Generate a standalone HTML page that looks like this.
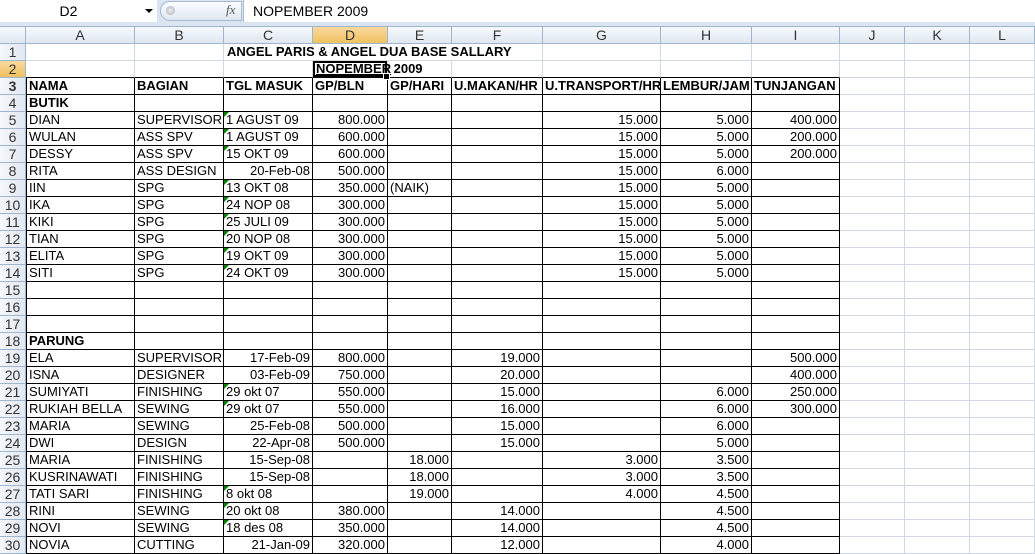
<!DOCTYPE html>
<html><head><meta charset="utf-8"><style>
*{box-sizing:border-box;margin:0;padding:0}
body{width:1035px;height:549px;overflow:hidden;background:#fff;font-family:"Liberation Sans",Arial,sans-serif;position:relative}
#fb{position:absolute;left:0;top:0;width:1035px;height:27px;background:#dbe5f1;border-bottom:1px solid #9eb6ce}
#nb{position:absolute;left:0;top:0;width:157px;height:22px;background:#fff;font-size:14px;line-height:22px;text-align:center;padding-right:20px;color:#000}
#arr{position:absolute;left:145px;top:9px;width:0;height:0;border-left:4px solid transparent;border-right:4px solid transparent;border-top:4px solid #000}
#pill{position:absolute;left:160px;top:1px;width:82px;height:20px;border-radius:10px 0 0 10px;background:linear-gradient(#fdfeff,#dde6f0);border:1px solid #a7bad0}
#dot{position:absolute;left:166px;top:6px;width:9px;height:9px;border-radius:50%;background:radial-gradient(#eee,#aab)}
#fx{position:absolute;left:226px;top:2px;font-family:"Liberation Serif",serif;font-style:italic;font-size:13px;color:#555}
#inp{position:absolute;left:243px;top:0;width:792px;height:22px;background:#fff;border-left:1px solid #a7bad0;font-size:14px;line-height:22px;padding-left:9px}
table{position:absolute;left:0;top:27px;border-spacing:0;table-layout:fixed;width:1035px}
td{height:17px;font-size:13px;line-height:16px;white-space:nowrap;overflow:hidden;padding:0 2px;border-right:1px solid #d0d7e5;border-bottom:1px solid #d0d7e5;position:relative;vertical-align:bottom}
tr.h td{height:16px;background:linear-gradient(#f7f9fc,#dfe7f1);border-right:1px solid #9eb6ce;border-bottom:1px solid #9eb6ce;text-align:center;color:#333;font-size:14px}
td:first-child{background:linear-gradient(90deg,#f4f7fb,#e1e8f1);border-right:1px solid #9eb6ce;border-bottom:1px solid #9eb6ce;text-align:center;color:#333;padding:0;font-size:14px}
tr.h td.sel,td.sel{background:linear-gradient(#f9d99f,#f1c15f)!important}
tr.k td:nth-child(n+2):nth-child(-n+10){border-right-color:#000;border-bottom-color:#000}
tr.k td:nth-child(2){border-left:1px solid #000}
tr.t td:nth-child(n+2):nth-child(-n+10){border-bottom-color:#000}
.r{text-align:right}.b{font-weight:bold}
.g::before{content:"";position:absolute;left:0;top:0;border-top:5px solid #008000;border-right:5px solid transparent}
#d2{box-shadow:inset 0 0 0 2px #000;overflow:visible}
#d2::after{content:"";position:absolute;right:-3px;bottom:-3px;width:5px;height:5px;background:#000;border:1px solid #fff;z-index:3}
.ttl{position:absolute;font-size:13px;font-weight:bold;line-height:16px;background:#fff;white-space:nowrap;z-index:2}
</style></head><body>
<div id="fb"></div><div id="nb">D2</div><div id="arr"></div><div id="pill"></div><div id="dot"></div><div id="fx">fx</div><div id="inp">NOPEMBER 2009</div>
<table>
<colgroup><col style="width:26px"><col style="width:109px"><col style="width:89px"><col style="width:89px"><col style="width:75px"><col style="width:64px"><col style="width:91px"><col style="width:118px"><col style="width:91px"><col style="width:88px"><col style="width:65px"><col style="width:65px"><col style="width:65px"></colgroup>
<tr class="h"><td></td><td>A</td><td>B</td><td>C</td><td class="sel">D</td><td>E</td><td>F</td><td>G</td><td>H</td><td>I</td><td>J</td><td>K</td><td>L</td></tr>
<tr><td>1</td><td></td><td></td><td></td><td></td><td></td><td></td><td></td><td></td><td></td><td></td><td></td><td></td></tr>
<tr class="t"><td class="sel">2</td><td></td><td></td><td></td><td id="d2"></td><td></td><td></td><td></td><td></td><td></td><td></td><td></td><td></td></tr>
<tr class="k b"><td>3</td><td>NAMA</td><td>BAGIAN</td><td>TGL MASUK</td><td>GP/BLN</td><td>GP/HARI</td><td>U.MAKAN/HR</td><td>U.TRANSPORT/HR</td><td>LEMBUR/JAM</td><td>TUNJANGAN</td><td></td><td></td><td></td></tr>
<tr class="k"><td>4</td><td class="b">BUTIK</td><td></td><td></td><td></td><td></td><td></td><td></td><td></td><td></td><td></td><td></td><td></td></tr>
<tr class="k"><td>5</td><td>DIAN</td><td>SUPERVISOR</td><td class="g">1 AGUST 09</td><td class="r">800.000</td><td></td><td></td><td class="r">15.000</td><td class="r">5.000</td><td class="r">400.000</td><td></td><td></td><td></td></tr>
<tr class="k"><td>6</td><td>WULAN</td><td>ASS SPV</td><td class="g">1 AGUST 09</td><td class="r">600.000</td><td></td><td></td><td class="r">15.000</td><td class="r">5.000</td><td class="r">200.000</td><td></td><td></td><td></td></tr>
<tr class="k"><td>7</td><td>DESSY</td><td>ASS SPV</td><td class="g">15 OKT 09</td><td class="r">600.000</td><td></td><td></td><td class="r">15.000</td><td class="r">5.000</td><td class="r">200.000</td><td></td><td></td><td></td></tr>
<tr class="k"><td>8</td><td>RITA</td><td>ASS DESIGN</td><td class="r">20-Feb-08</td><td class="r">500.000</td><td></td><td></td><td class="r">15.000</td><td class="r">6.000</td><td></td><td></td><td></td><td></td></tr>
<tr class="k"><td>9</td><td>IIN</td><td>SPG</td><td class="g">13 OKT 08</td><td class="r">350.000</td><td>(NAIK)</td><td></td><td class="r">15.000</td><td class="r">5.000</td><td></td><td></td><td></td><td></td></tr>
<tr class="k"><td>10</td><td>IKA</td><td>SPG</td><td class="g">24 NOP 08</td><td class="r">300.000</td><td></td><td></td><td class="r">15.000</td><td class="r">5.000</td><td></td><td></td><td></td><td></td></tr>
<tr class="k"><td>11</td><td>KIKI</td><td>SPG</td><td class="g">25 JULI 09</td><td class="r">300.000</td><td></td><td></td><td class="r">15.000</td><td class="r">5.000</td><td></td><td></td><td></td><td></td></tr>
<tr class="k"><td>12</td><td>TIAN</td><td>SPG</td><td class="g">20 NOP 08</td><td class="r">300.000</td><td></td><td></td><td class="r">15.000</td><td class="r">5.000</td><td></td><td></td><td></td><td></td></tr>
<tr class="k"><td>13</td><td>ELITA</td><td>SPG</td><td class="g">19 OKT 09</td><td class="r">300.000</td><td></td><td></td><td class="r">15.000</td><td class="r">5.000</td><td></td><td></td><td></td><td></td></tr>
<tr class="k"><td>14</td><td>SITI</td><td>SPG</td><td class="g">24 OKT 09</td><td class="r">300.000</td><td></td><td></td><td class="r">15.000</td><td class="r">5.000</td><td></td><td></td><td></td><td></td></tr>
<tr class="k"><td>15</td><td></td><td></td><td></td><td></td><td></td><td></td><td></td><td></td><td></td><td></td><td></td><td></td></tr>
<tr class="k"><td>16</td><td></td><td></td><td></td><td></td><td></td><td></td><td></td><td></td><td></td><td></td><td></td><td></td></tr>
<tr class="k"><td>17</td><td></td><td></td><td></td><td></td><td></td><td></td><td></td><td></td><td></td><td></td><td></td><td></td></tr>
<tr class="k"><td>18</td><td class="b">PARUNG</td><td></td><td></td><td></td><td></td><td></td><td></td><td></td><td></td><td></td><td></td><td></td></tr>
<tr class="k"><td>19</td><td>ELA</td><td>SUPERVISOR</td><td class="r">17-Feb-09</td><td class="r">800.000</td><td></td><td class="r">19.000</td><td></td><td></td><td class="r">500.000</td><td></td><td></td><td></td></tr>
<tr class="k"><td>20</td><td>ISNA</td><td>DESIGNER</td><td class="r">03-Feb-09</td><td class="r">750.000</td><td></td><td class="r">20.000</td><td></td><td></td><td class="r">400.000</td><td></td><td></td><td></td></tr>
<tr class="k"><td>21</td><td>SUMIYATI</td><td>FINISHING</td><td class="g">29 okt 07</td><td class="r">550.000</td><td></td><td class="r">15.000</td><td></td><td class="r">6.000</td><td class="r">250.000</td><td></td><td></td><td></td></tr>
<tr class="k"><td>22</td><td>RUKIAH BELLA</td><td>SEWING</td><td class="g">29 okt 07</td><td class="r">550.000</td><td></td><td class="r">16.000</td><td></td><td class="r">6.000</td><td class="r">300.000</td><td></td><td></td><td></td></tr>
<tr class="k"><td>23</td><td>MARIA</td><td>SEWING</td><td class="r">25-Feb-08</td><td class="r">500.000</td><td></td><td class="r">15.000</td><td></td><td class="r">6.000</td><td></td><td></td><td></td><td></td></tr>
<tr class="k"><td>24</td><td>DWI</td><td>DESIGN</td><td class="r">22-Apr-08</td><td class="r">500.000</td><td></td><td class="r">15.000</td><td></td><td class="r">5.000</td><td></td><td></td><td></td><td></td></tr>
<tr class="k"><td>25</td><td>MARIA</td><td>FINISHING</td><td class="r">15-Sep-08</td><td></td><td class="r">18.000</td><td></td><td class="r">3.000</td><td class="r">3.500</td><td></td><td></td><td></td><td></td></tr>
<tr class="k"><td>26</td><td>KUSRINAWATI</td><td>FINISHING</td><td class="r">15-Sep-08</td><td></td><td class="r">18.000</td><td></td><td class="r">3.000</td><td class="r">3.500</td><td></td><td></td><td></td><td></td></tr>
<tr class="k"><td>27</td><td>TATI SARI</td><td>FINISHING</td><td class="g">8 okt 08</td><td></td><td class="r">19.000</td><td></td><td class="r">4.000</td><td class="r">4.500</td><td></td><td></td><td></td><td></td></tr>
<tr class="k"><td>28</td><td>RINI</td><td>SEWING</td><td class="g">20 okt 08</td><td class="r">380.000</td><td></td><td class="r">14.000</td><td></td><td class="r">4.500</td><td></td><td></td><td></td><td></td></tr>
<tr class="k"><td>29</td><td>NOVI</td><td>SEWING</td><td class="g">18 des 08</td><td class="r">350.000</td><td></td><td class="r">14.000</td><td></td><td class="r">4.500</td><td></td><td></td><td></td><td></td></tr>
<tr class="k"><td>30</td><td>NOVIA</td><td>CUTTING</td><td class="r">21-Jan-09</td><td class="r">320.000</td><td></td><td class="r">12.000</td><td></td><td class="r">4.000</td><td></td><td></td><td></td><td></td></tr>
</table>
<div class="ttl" style="left:226px;top:44px;padding-left:1px">ANGEL PARIS &amp; ANGEL DUA BASE SALLARY</div>
<div class="ttl" style="left:389px;top:61px;background:#fff;padding-left:1px">&nbsp;2009</div>
<div class="ttl" style="left:316px;top:61px;background:transparent"><u>NOPEMBER</u></div>
</body></html>
